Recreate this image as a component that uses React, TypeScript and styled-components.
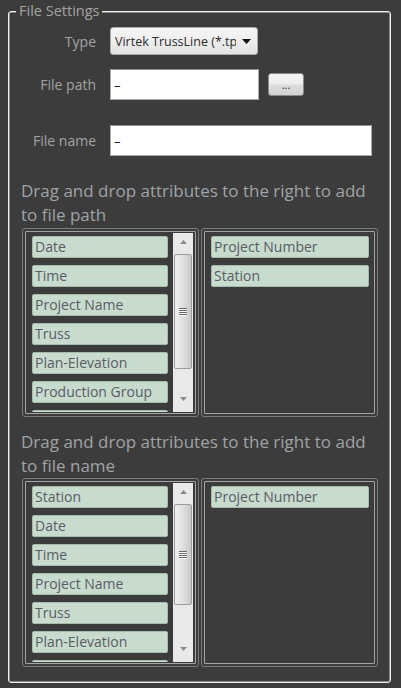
import React from 'react';
import styled, { createGlobalStyle } from 'styled-components';

const Global = createGlobalStyle`
  html, body { margin: 0; padding: 0; background: #3c3c3c; }
  body { font-family: "Open Sans", "Noto Sans", "DejaVu Sans", sans-serif; }
`;

const Page = styled.div`
  width: 401px;
  height: 688px;
  box-sizing: border-box;
  padding-top: 1px;
  background: #3c3c3c;
  overflow: hidden;
`;

const Group = styled.fieldset`
  box-sizing: border-box;
  margin: 0 0 0 8px;
  width: 383px;
  height: 682px;
  padding: 6px 12px 0 12px;
  border: 1px solid #eeeeee;
  border-radius: 3px;
  box-shadow: inset 0 0 0 1px #8a8a8a;
  min-inline-size: auto;
`;

const Legend = styled.legend`
  padding: 0 3px;
  margin-left: -5px;
  font-size: 14.5px;
  line-height: 20px;
  color: #a3a3a3;
  background: #3c3c3c;
`;

const FieldRow = styled.div<{ $mt: number }>`
  display: flex;
  align-items: center;
  margin-top: ${(p) => p.$mt}px;
`;

const Label = styled.label`
  width: 75px;
  margin-right: 14px;
  text-align: right;
  font-size: 14px;
  color: #a3a3a3;
  white-space: nowrap;
`;

const Combo = styled.div`
  box-sizing: border-box;
  width: 148px;
  height: 28px;
  display: flex;
  align-items: center;
  padding: 0 6px 0 4px;
  border: 1px solid #acacac;
  border-radius: 3px;
  background: linear-gradient(#f7f7f7, #e3e3e3);
  color: #2b2b2b;
  font-size: 12.5px;
`;

const ComboText = styled.span`
  width: 121px;
  overflow: hidden;
  white-space: nowrap;
`;

const ComboArrow = styled.svg`
  margin-left: auto;
`;

const TextBox = styled.input<{ $w: number }>`
  box-sizing: border-box;
  width: ${(p) => p.$w}px;
  height: 31px;
  margin: 0;
  padding: 0 3px;
  border: 1px solid #a9abb0;
  border-top-color: #8e9096;
  background: #ffffff;
  color: #222222;
  font-family: inherit;
  font-size: 13px;
  outline: none;
`;

const BrowseButton = styled.button`
  box-sizing: border-box;
  width: 36px;
  height: 23px;
  margin-left: 9px;
  padding: 0 0 3px 0;
  border: 1px solid #8a8a8a;
  border-radius: 3px;
  background: linear-gradient(#f4f4f4 0%, #ececec 48%, #dddddd 52%, #d2d2d2 100%);
  color: #222222;
  font-family: inherit;
  font-size: 11px;
  line-height: 14px;
  display: flex;
  align-items: flex-end;
  justify-content: center;
`;

const Hint = styled.p<{ $mt: number }>`
  margin: ${(p) => p.$mt}px 0 0 0;
  font-size: 17px;
  line-height: 24px;
  color: #a0a3a6;
`;

const Lists = styled.div<{ $mt: number }>`
  display: flex;
  gap: 2px;
  height: 189px;
  margin: ${(p) => p.$mt}px 0 0 1px;
`;

const Frame = styled.div`
  flex: 0 0 177px;
  box-sizing: border-box;
  display: flex;
  padding: 2px;
  border: 1px solid #7c7c7c;
  border-radius: 3px;
`;

const Inner = styled.div`
  flex: 1;
  display: flex;
  border: 1px solid #a4a4a4;
  border-radius: 1px;
`;

const Viewport = styled.div`
  flex: 1;
  min-width: 0;
  display: flex;
  flex-direction: column;
  gap: 7px;
  margin: 1px 0;
  padding: 3px 5px 0 6px;
  overflow: hidden;
`;

const Item = styled.div`
  flex-shrink: 0;
  box-sizing: border-box;
  height: 22px;
  padding: 0 2px;
  border: 1px solid #a6bcab;
  border-radius: 2px;
  background: #c7dccc;
  color: #5b5b68;
  font-size: 14px;
  line-height: 20px;
  white-space: nowrap;
  overflow: hidden;
`;

const Track = styled.div`
  flex: 0 0 20px;
  display: flex;
  flex-direction: column;
  align-items: center;
  margin: 1px 2px 1px 0;
  background: #e9e9e9;
`;

const ArrowCell = styled.div<{ $mb?: number }>`
  height: 18px;
  margin-bottom: ${(p) => p.$mb ?? 0}px;
  display: flex;
  align-items: center;
  justify-content: center;
`;

const Thumb = styled.div<{ $h: number }>`
  box-sizing: border-box;
  width: 18px;
  height: ${(p) => p.$h}px;
  margin-top: 3px;
  display: flex;
  align-items: center;
  justify-content: center;
  border: 1px solid #9c9c9c;
  border-radius: 2px;
  background: linear-gradient(to right, #f0f0f0 0%, #e2e2e2 45%, #d2d2d2 80%, #c6c6c6 100%);
`;

const Spacer = styled.div`
  flex: 1;
`;

const UpArrow = () => (
  <svg width="7" height="4" viewBox="0 0 7 4">
    <polygon points="0,4 3.5,0 7,4" fill="#8a8a8a" />
  </svg>
);

const DownArrow = () => (
  <svg width="7" height="4" viewBox="0 0 7 4">
    <polygon points="0,0 7,0 3.5,4" fill="#8a8a8a" />
  </svg>
);

const Grip = () => (
  <svg width="10" height="8" viewBox="0 0 10 8">
    <path d="M1 0.5H9M1 2.5H9M1 4.5H9M1 6.5H9" stroke="#6a6a6a" strokeWidth="1" />
    <path d="M1 1.5H9M1 3.5H9M1 5.5H9M1 7.5H9" stroke="#f8f8f8" strokeWidth="1" />
  </svg>
);

const ScrollBar = ({ thumb }: { thumb: number }) => (
  <Track>
    <ArrowCell>
      <UpArrow />
    </ArrowCell>
    <Thumb $h={thumb}>
      <Grip />
    </Thumb>
    <Spacer />
    <ArrowCell $mb={4}>
      <DownArrow />
    </ArrowCell>
  </Track>
);

const AttributeLists = ({
  mt,
  available,
  chosen,
  thumb,
}: {
  mt: number;
  available: string[];
  chosen: string[];
  thumb: number;
}) => (
  <Lists $mt={mt}>
    <Frame>
      <Inner>
        <Viewport>
          {available.map((a) => (
            <Item key={a}>{a}</Item>
          ))}
        </Viewport>
        <ScrollBar thumb={thumb} />
      </Inner>
    </Frame>
    <Frame>
      <Inner>
        <Viewport>
          {chosen.map((a) => (
            <Item key={a}>{a}</Item>
          ))}
        </Viewport>
      </Inner>
    </Frame>
  </Lists>
);

export default function App() {
  return (
    <Page>
      <Global />
      <Group>
        <Legend>File Settings</Legend>
        <FieldRow $mt={0}>
          <Label>Type</Label>
          <Combo>
            <ComboText>Virtek TrussLine (*.tpl)</ComboText>
            <ComboArrow width="9" height="5" viewBox="0 0 9 5">
              <polygon points="0,0 9,0 4.5,5" fill="#111111" />
            </ComboArrow>
          </Combo>
        </FieldRow>
        <FieldRow $mt={14}>
          <Label>File path</Label>
          <TextBox $w={149} defaultValue="–" readOnly />
          <BrowseButton>...</BrowseButton>
        </FieldRow>
        <FieldRow $mt={25}>
          <Label>File name</Label>
          <TextBox $w={262} defaultValue="–" readOnly />
        </FieldRow>
        <Hint $mt={23}>
          Drag and drop attributes to the right to add to file path
        </Hint>
        <AttributeLists
          mt={1}
          thumb={115}
          available={[
            'Date',
            'Time',
            'Project Name',
            'Truss',
            'Plan-Elevation',
            'Production Group',
            'Customer',
          ]}
          chosen={['Project Number', 'Station']}
        />
        <Hint $mt={13}>
          Drag and drop attributes to the right to add to file name
        </Hint>
        <AttributeLists
          mt={0}
          thumb={101}
          available={[
            'Station',
            'Date',
            'Time',
            'Project Name',
            'Truss',
            'Plan-Elevation',
            'Production Group',
          ]}
          chosen={['Project Number']}
        />
      </Group>
    </Page>
  );
}
